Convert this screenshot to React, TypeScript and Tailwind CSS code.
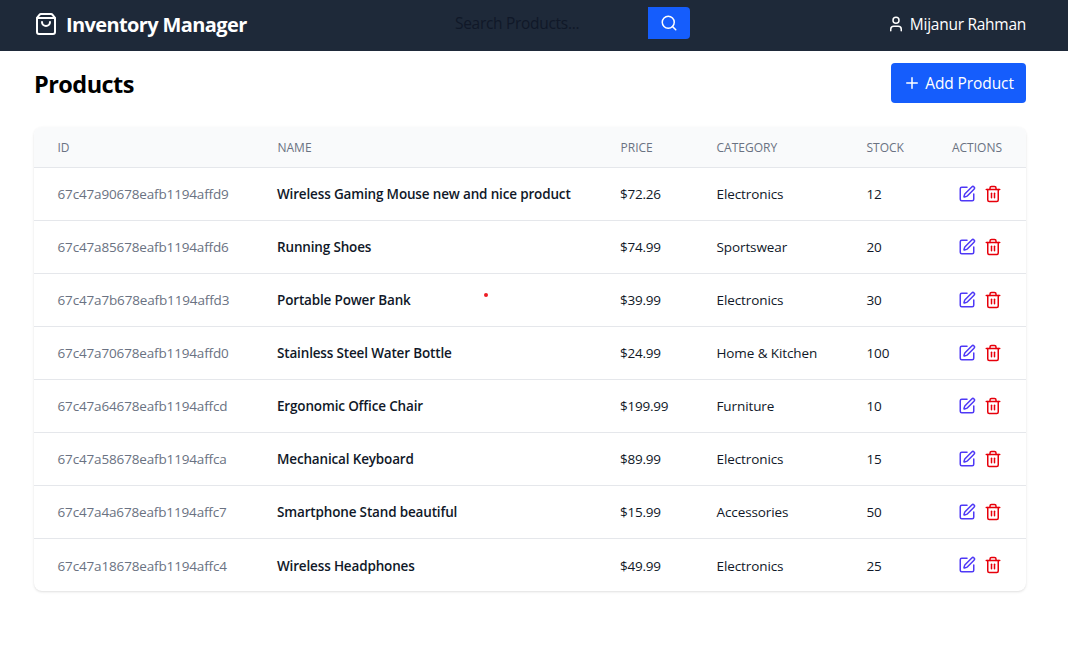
import { Plus, Search, ShoppingBag, SquarePen, Trash2, User } from "lucide-react";

type Product = { id: string; name: string; price: string; category: string; stock: number };

const products: Product[] = [
  { id: "67c47a90678eafb1194affd9", name: "Wireless Gaming Mouse new and nice product", price: "$72.26", category: "Electronics", stock: 12 },
  { id: "67c47a85678eafb1194affd6", name: "Running Shoes", price: "$74.99", category: "Sportswear", stock: 20 },
  { id: "67c47a7b678eafb1194affd3", name: "Portable Power Bank", price: "$39.99", category: "Electronics", stock: 30 },
  { id: "67c47a70678eafb1194affd0", name: "Stainless Steel Water Bottle", price: "$24.99", category: "Home & Kitchen", stock: 100 },
  { id: "67c47a64678eafb1194affcd", name: "Ergonomic Office Chair", price: "$199.99", category: "Furniture", stock: 10 },
  { id: "67c47a58678eafb1194affca", name: "Mechanical Keyboard", price: "$89.99", category: "Electronics", stock: 15 },
  { id: "67c47a4a678eafb1194affc7", name: "Smartphone Stand beautiful", price: "$15.99", category: "Accessories", stock: 50 },
  { id: "67c47a18678eafb1194affc4", name: "Wireless Headphones", price: "$49.99", category: "Electronics", stock: 25 },
];

function Header() {
  return (
    <header className="flex h-[51px] items-center bg-[#1e2939] pr-[42px] pl-[34px] text-white">
      <div className="flex w-[410px] items-center gap-2 pb-[4px]">
        <ShoppingBag size={24} />
        <span className="mt-[2px] text-[20px] leading-7 font-bold tracking-[-0.62px] whitespace-nowrap">Inventory Manager</span>
      </div>
      <form className="flex h-8 w-[246px] -translate-y-[3px]">
        <input
          className="w-[204px] bg-transparent pt-[3px] pl-[11px] text-[15.5px] tracking-[-0.3px] outline-none placeholder:text-[#101828]"
          placeholder="Search Products..."
        />
        <button type="button" aria-label="Search" className="flex w-[42px] items-center justify-center rounded-r-[4px] bg-[#155dfc]">
          <Search size={18} />
        </button>
      </form>
      <div className="ml-auto flex items-center gap-[5px] pb-[4px]">
        <User size={18} />
        <span className="text-[15.5px] leading-6 tracking-[-0.27px] whitespace-nowrap">Mijanur Rahman</span>
      </div>
    </header>
  );
}

function ProductTable() {
  return (
    <div className="relative mt-6 overflow-hidden rounded-lg bg-white shadow-sm">
      <table className="w-full table-fixed border-collapse text-left whitespace-nowrap">
        <colgroup>
          <col className="w-[220px]" />
          <col className="w-[343px]" />
          <col className="w-[96px]" />
          <col className="w-[150px]" />
          <col className="w-[85px]" />
          <col />
        </colgroup>
        <thead className="bg-gray-50">
          <tr className="h-[40px] text-[12px] text-[#6a7282]">
            {["ID", "NAME", "PRICE", "CATEGORY", "STOCK"].map((label) => (
              <th key={label} className="pt-[2px] pl-[23.5px] font-medium">{label}</th>
            ))}
            <th className="pt-[2px] pr-[24px] text-right font-medium">ACTIONS</th>
          </tr>
        </thead>
        <tbody>
          {products.map((p) => (
            <tr key={p.id} className="h-[53px] border-t border-gray-200 text-[13.5px] text-[#101828]">
              <td className="pt-[2px] pl-[23.5px] tracking-[-0.15px] text-[#6a7282]">{p.id}</td>
              <td className="pt-[2px] pl-[23px] font-semibold tracking-[-0.16px]">{p.name}</td>
              <td className="pt-[2px] pl-[23px] tracking-[-0.25px]">{p.price}</td>
              <td className="pt-[2px] pl-[23.5px] tracking-[-0.1px]">{p.category}</td>
              <td className="pt-[2px] pl-[23.5px] tracking-[-0.1px]">{p.stock}</td>
              <td className="pr-[24px]">
                <div className="flex justify-end gap-2">
                  <button type="button" aria-label="Edit" className="text-[#4f39f6]"><SquarePen size={18} /></button>
                  <button type="button" aria-label="Delete" className="text-[#e7000b]"><Trash2 size={18} /></button>
                </div>
              </td>
            </tr>
          ))}
        </tbody>
      </table>
      <span className="absolute top-[166px] left-[450px] size-1 rounded-full bg-[#ed1c24]" />
    </div>
  );
}

export default function App() {
  return (
    <div className="min-h-screen bg-white font-['Open_Sans','Noto_Sans',sans-serif]">
      <Header />
      <main className="pt-3 pr-[42px] pl-[34px]">
        <div className="flex h-10 items-center justify-between">
          <h1 className="mt-[2px] text-[23.5px] leading-8 font-bold tracking-[-0.55px] text-black">Products</h1>
          <button type="button" className="flex h-10 w-[135px] items-center justify-center gap-1 rounded-[4px] bg-[#155dfc] text-[15.5px] tracking-[-0.1px] text-white">
            <Plus size={18} />
            <span className="mt-[2px] whitespace-nowrap">Add Product</span>
          </button>
        </div>
        <ProductTable />
      </main>
    </div>
  );
}
